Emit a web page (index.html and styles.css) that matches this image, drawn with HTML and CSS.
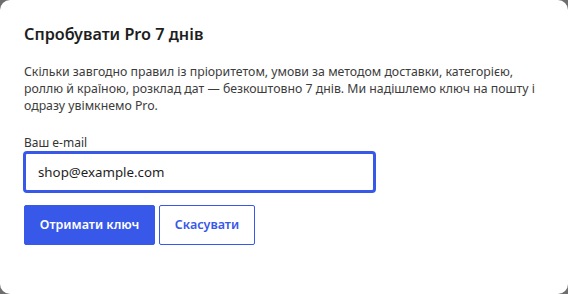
FILE: index.html
```html
<!DOCTYPE html>
<html lang="uk">
<head>
  <meta charset="UTF-8">
  <title>Спробувати Pro</title>
  <link rel="stylesheet" href="styles.css">
</head>
<body>
  <div class="dialog">
    <h2 class="title">Спробувати Pro 7 днів</h2>
    <p class="desc">Скільки завгодно правил із пріоритетом, умови за методом доставки, категорією, роллю й країною, розклад дат — безкоштовно 7 днів. Ми надішлемо ключ на пошту і одразу увімкнемо Pro.</p>

    <label class="field-label" for="email">Ваш e-mail</label>
    <input class="field" type="email" id="email" value="shop@example.com">

    <div class="actions">
      <button class="btn primary">Отримати ключ</button>
      <button class="btn secondary">Скасувати</button>
    </div>
  </div>
</body>
</html>
```

FILE: styles.css
```css
body {
  margin: 0;
  background: #6e6e6e;
  font-family: "Noto Sans", "Open Sans", sans-serif;
  color: #1e1e1e;
}

.dialog {
  background: #fff;
  width: 568px;
  height: 294px;
  box-sizing: border-box;
  border-radius: 10px;
  padding: 23px 24px;
}

.title {
  margin: 0 0 18px;
  font-size: 16.2px;
  line-height: 22px;
  font-weight: 600;
}

.desc {
  margin: 0 0 20px;
  font-size: 12.3px;
  line-height: 17.2px;
  color: #3c3c3c;
}

.field-label {
  display: block;
  font-size: 12px;
  line-height: 16px;
  color: #333;
}

.field {
  display: block;
  box-sizing: border-box;
  width: 353px;
  height: 42px;
  margin: 0 0 12px -1px;
  padding: 0 12px;
  border: 3px solid #3858e9;
  border-radius: 4px;
  font-family: inherit;
  font-size: 13.3px;
  color: #1e1e1e;
  outline: none;
}

.actions {
  display: flex;
  gap: 4px;
}

.btn {
  height: 40px;
  border-radius: 2px;
  font-family: inherit;
  font-size: 12.5px;
  font-weight: 600;
  padding: 0;
  white-space: nowrap;
  cursor: pointer;
}

.primary {
  background: #3858e9;
  border: 1px solid #3858e9;
  color: #fff;
  width: 131px;
}

.secondary {
  background: #fff;
  border: 1px solid #3858e9;
  color: #3858e9;
  width: 96px;
}
```
